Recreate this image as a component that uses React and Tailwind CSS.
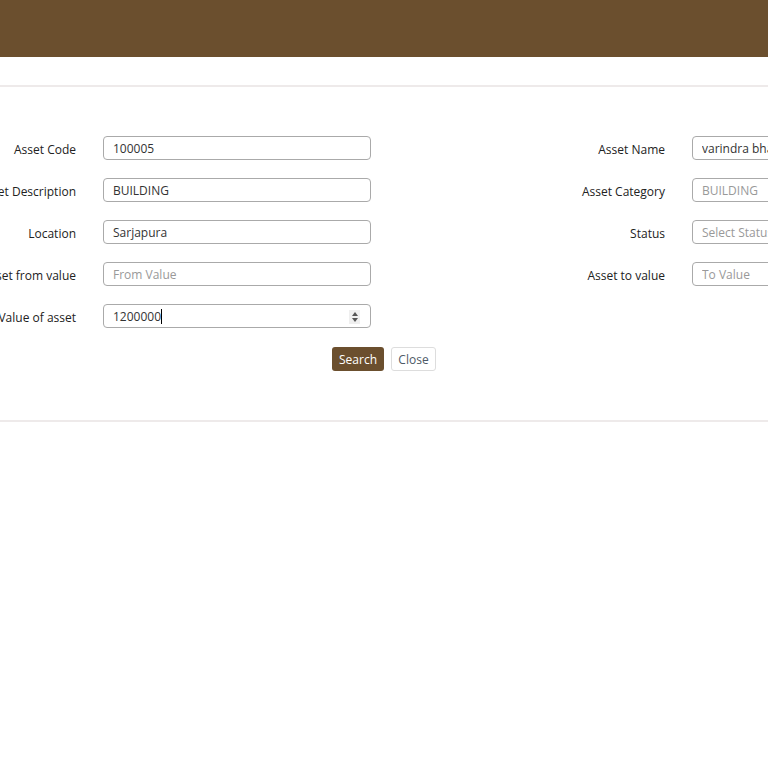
import React from "react";

const font = { fontFamily: '"Open Sans", "Noto Sans", sans-serif' };

const inputCls =
  "h-6 w-[268px] shrink-0 rounded border border-[#aaa] bg-white px-[9px] pt-px text-[12px] text-[#333] placeholder:text-[#999] outline-none";

const Row = ({ label, children }) => (
  <div className="flex items-center gap-[27px]">
    <label className="w-[180px] shrink-0 pt-[3px] text-right text-[12px] text-[#222]">{label}</label>
    {children}
  </div>
);

const App = () => {
  return (
    <div className="min-h-screen w-[768px] overflow-hidden bg-white" style={font}>
      {/* top bar */}
      <header className="h-[57px] bg-[#6b4f2e]"></header>
      <div className="h-[28px]"></div>
      <div className="border-t-2 border-[#eeeaea]"></div>

      <section className="pt-[49px] pb-[49px]">
        <div className="-ml-[104px] flex gap-[114px]">
          {/* left column */}
          <div className="flex flex-col gap-[18px]">
            <Row label="Asset Code">
              <input className={inputCls} defaultValue="100005" />
            </Row>
            <Row label="Asset Description">
              <input className={inputCls} defaultValue="BUILDING" />
            </Row>
            <Row label="Location">
              <input className={inputCls} defaultValue="Sarjapura" />
            </Row>
            <Row label="Asset from value">
              <input className={inputCls} placeholder="From Value" />
            </Row>
            <Row label="Value of asset">
              <div className="flex h-6 w-[268px] shrink-0 items-center rounded border border-[#aaa] bg-white pl-[9px] pr-[10px] pt-px text-[12px] text-[#333]">
                <span>1200000</span>
                <span className="h-[15px] w-px bg-black"></span>
                <span className="ml-auto flex h-[14px] w-[11px] flex-col items-center justify-center gap-[2px] bg-[#efefef]">
                  <svg width="6" height="4" viewBox="0 0 6 4">
                    <path d="M3 0L6 4H0Z" fill="#555" />
                  </svg>
                  <svg width="6" height="4" viewBox="0 0 6 4">
                    <path d="M0 0H6L3 4Z" fill="#555" />
                  </svg>
                </span>
              </div>
            </Row>
          </div>

          {/* right column */}
          <div className="flex flex-col gap-[18px]">
            <Row label="Asset Name">
              <input className={inputCls} defaultValue="varindra bhat" />
            </Row>
            <Row label="Asset Category">
              <input className={inputCls} placeholder="BUILDING" readOnly />
            </Row>
            <Row label="Status">
              <div className="flex h-6 w-[268px] shrink-0 items-center rounded border border-[#aaa] bg-white px-[9px] pt-px text-[12px] text-[#999]">
                Select Status
              </div>
            </Row>
            <Row label="Asset to value">
              <input className={inputCls} placeholder="To Value" />
            </Row>
          </div>
        </div>

        <div className="mt-[19px] flex justify-center gap-[7px]">
          <button className="h-6 w-[52px] rounded-[3px] bg-[#6b4f2e] pt-px text-[12px] text-white">Search</button>
          <button className="h-6 w-[45px] rounded-[3px] border border-[#ddd] bg-white pt-px text-[12px] text-[#4d5966]">
            Close
          </button>
        </div>
      </section>

      <div className="border-t-2 border-[#eeeaea]"></div>
    </div>
  );
};

export default App;
